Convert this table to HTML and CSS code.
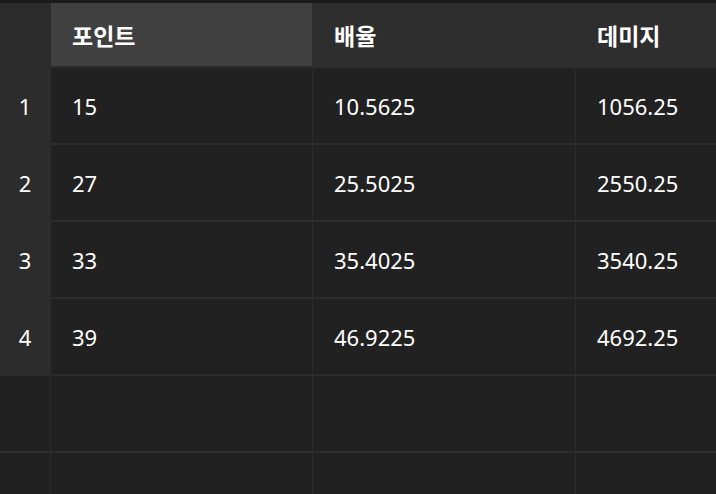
FILE: index.html
```html
<!DOCTYPE html>
<html lang="ko">
<head>
<meta charset="utf-8">
<link rel="stylesheet" href="styles.css">
</head>
<body>
<div class="grid">
  <div class="cell corner"></div>
  <div class="cell head active">포인트</div>
  <div class="cell head">배율</div>
  <div class="cell head">데미지</div>

  <div class="cell rowhead">1</div>
  <div class="cell">15</div>
  <div class="cell">10.5625</div>
  <div class="cell">1056.25</div>

  <div class="cell rowhead">2</div>
  <div class="cell">27</div>
  <div class="cell">25.5025</div>
  <div class="cell">2550.25</div>

  <div class="cell rowhead">3</div>
  <div class="cell">33</div>
  <div class="cell">35.4025</div>
  <div class="cell">3540.25</div>

  <div class="cell rowhead">4</div>
  <div class="cell">39</div>
  <div class="cell">46.9225</div>
  <div class="cell">4692.25</div>

  <div class="cell"></div>
  <div class="cell"></div>
  <div class="cell"></div>
  <div class="cell"></div>

  <div class="cell"></div>
  <div class="cell"></div>
  <div class="cell"></div>
  <div class="cell"></div>
</div>
</body>
</html>
```
FILE: styles.css
```css
html, body {
  margin: 0;
  padding: 0;
  height: 100%;
  overflow: hidden;
}
body {
  background: #1b1b1b;
  padding-top: 3px;
  box-sizing: border-box;
  font-family: "Noto Sans", "Noto Sans CJK KR", sans-serif;
  font-size: 22px;
  color: #ffffff;
}
.grid {
  display: grid;
  height: 100%;
  overflow: hidden;
  grid-template-columns: 50px 261px 262px 1fr;
  grid-template-rows: 63px repeat(6, 75px);
  column-gap: 1px;
  row-gap: 2px;
  background: #2c2c2c;
}
.cell {
  background: #212121;
  display: flex;
  align-items: center;
  padding-left: 21px;
  white-space: nowrap;
}
.head {
  background: #2e2e2e;
  font-weight: 700;
  font-size: 23px;
}
.head.active {
  background: #404040;
}
.corner {
  background: #2b2b2b;
  padding: 0;
}
.rowhead {
  background: #2c2c2c;
  padding: 0;
  justify-content: center;
}
```
